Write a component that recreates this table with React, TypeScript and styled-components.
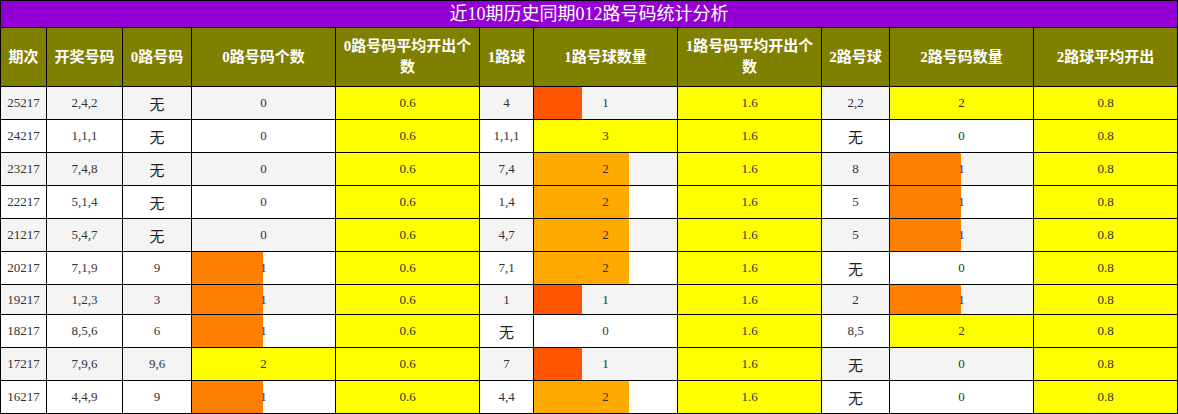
import React from "react";
import styled, { createGlobalStyle } from "styled-components";

const Global = createGlobalStyle`
  html, body { margin: 0; padding: 0; background: #fff; }
  body { font-family: "Liberation Serif", "Noto Sans CJK SC", serif; }
`;

const COLS = [45, 75, 68, 143, 143, 53, 143, 143, 67, 143, 143];

const Grid = styled.div`
  display: grid;
  grid-template-columns: ${COLS.map((c) => `${c}px`).join(" ")};
  gap: 1px;
  padding: 1px;
  background: #000;
  width: 1178px;
  box-sizing: border-box;
`;

const Title = styled.div`
  grid-column: 1 / -1;
  height: 26px;
  background: #9400d3;
  color: #fff;
  font-size: 18px;
  display: flex;
  align-items: center;
  justify-content: center;
  line-height: 1;
`;

const Head = styled.div`
  height: 58px;
  background: #808000;
  color: #fff;
  font-size: 15px;
  font-weight: bold;
  line-height: 21px;
  display: flex;
  align-items: center;
  justify-content: center;
  text-align: center;
  padding: 0 4px;
  box-sizing: border-box;
`;

const Cell = styled.div<{ $tall: boolean; $bg: string; $fill?: number; $bar?: string }>`
  height: ${(p) => (p.$tall ? 32 : 29)}px;
  background: ${(p) =>
    p.$fill && p.$bar
      ? `linear-gradient(to right, ${p.$bar} 0, ${p.$bar} ${p.$fill * 100}%, ${p.$bg} ${p.$fill * 100}%, ${p.$bg} 100%)`
      : p.$bg};
  color: #333;
  font-size: 13px;
  display: flex;
  align-items: center;
  justify-content: center;
  white-space: nowrap;
`;

const None = styled.span`
  font-size: 15px;
  color: #222;
`;

type Row = [string, string, string, number, string, string, number, string, string, number, string];

const rows: Row[] = [
  ["25217", "2,4,2", "无", 0, "0.6", "4", 1, "1.6", "2,2", 2, "0.8"],
  ["24217", "1,1,1", "无", 0, "0.6", "1,1,1", 3, "1.6", "无", 0, "0.8"],
  ["23217", "7,4,8", "无", 0, "0.6", "7,4", 2, "1.6", "8", 1, "0.8"],
  ["22217", "5,1,4", "无", 0, "0.6", "1,4", 2, "1.6", "5", 1, "0.8"],
  ["21217", "5,4,7", "无", 0, "0.6", "4,7", 2, "1.6", "5", 1, "0.8"],
  ["20217", "7,1,9", "9", 1, "0.6", "7,1", 2, "1.6", "无", 0, "0.8"],
  ["19217", "1,2,3", "3", 1, "0.6", "1", 1, "1.6", "2", 1, "0.8"],
  ["18217", "8,5,6", "6", 1, "0.6", "无", 0, "1.6", "8,5", 2, "0.8"],
  ["17217", "7,9,6", "9,6", 2, "0.6", "7", 1, "1.6", "无", 0, "0.8"],
  ["16217", "4,4,9", "9", 1, "0.6", "4,4", 2, "1.6", "无", 0, "0.8"],
];

const heads = [
  "期次",
  "开奖号码",
  "0路号码",
  "0路号码个数",
  "0路号码平均开出个数",
  "1路球",
  "1路号球数量",
  "1路号码平均开出个数",
  "2路号球",
  "2路号码数量",
  "2路球平均开出",
];

const YELLOW = "#ffff00";

const barColor = (f: number) => `rgb(255, ${Math.round(255 * f)}, 0)`;

const Text = ({ v }: { v: string }) => (v === "无" ? <None>无</None> : <>{v}</>);

const CountCell = ({ v, max, tall, bg }: { v: number; max: number; tall: boolean; bg: string }) => {
  const f = v / max;
  if (v === 0) return <Cell $tall={tall} $bg={bg}>0</Cell>;
  if (f >= 1) return <Cell $tall={tall} $bg={YELLOW}>{v}</Cell>;
  return (
    <Cell $tall={tall} $bg={bg} $fill={f} $bar={barColor(f)}>
      {v}
    </Cell>
  );
};

export default function App() {
  return (
    <>
      <Global />
      <Grid>
        <Title>近10期历史同期012路号码统计分析</Title>
        {heads.map((h) => (
          <Head key={h}>{h}</Head>
        ))}
        {rows.map((r, i) => {
          const tall = r.some((x) => x === "无");
          const bg = i % 2 === 0 ? "#f4f4f4" : "#ffffff";
          return (
            <React.Fragment key={r[0]}>
              <Cell $tall={tall} $bg={bg}>{r[0]}</Cell>
              <Cell $tall={tall} $bg={bg}>{r[1]}</Cell>
              <Cell $tall={tall} $bg={bg}><Text v={r[2]} /></Cell>
              <CountCell v={r[3]} max={2} tall={tall} bg={bg} />
              <Cell $tall={tall} $bg={YELLOW}>{r[4]}</Cell>
              <Cell $tall={tall} $bg={bg}><Text v={r[5]} /></Cell>
              <CountCell v={r[6]} max={3} tall={tall} bg={bg} />
              <Cell $tall={tall} $bg={YELLOW}>{r[7]}</Cell>
              <Cell $tall={tall} $bg={bg}><Text v={r[8]} /></Cell>
              <CountCell v={r[9]} max={2} tall={tall} bg={bg} />
              <Cell $tall={tall} $bg={YELLOW}>{r[10]}</Cell>
            </React.Fragment>
          );
        })}
      </Grid>
    </>
  );
}
